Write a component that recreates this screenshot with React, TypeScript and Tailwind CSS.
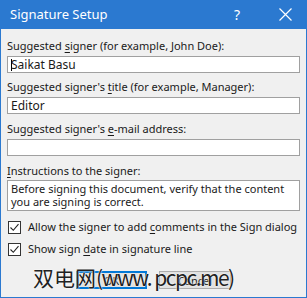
import React from 'react';

const Label = ({ pre, u, post }: { pre: string; u: string; post: string }) => (
  <div className="h-[16px] leading-[16px] whitespace-nowrap">
    {pre}
    <span className="underline underline-offset-2">{u}</span>
    {post}
  </div>
);

const Check = () => (
  <span className="w-[13px] h-[13px] border border-[#333333] bg-white flex items-center justify-center shrink-0">
    <svg width="11" height="11" viewBox="0 0 11 11">
      <path d="M1.5 5.5 L4.3 8.3 L9.5 2.2" fill="none" stroke="#222" strokeWidth="1.1" />
    </svg>
  </span>
);

export default function App() {
  return (
    <div className="relative w-[307px] h-[298px] bg-[#f0f0f0] border-x border-b border-[#2b79d0] font-['Noto_Sans',sans-serif] text-[11px] text-[#1a1a1a] overflow-hidden">
      <div className="h-[29px] -mx-px bg-[#2b79d0] flex items-center pl-[10px] pr-[15px] text-white text-[13px]">
        <span className="flex-1">Signature Setup</span>
        <span className="w-[10px] text-[14px] mr-[35px]">?</span>
        <svg width="13" height="13" viewBox="0 0 13 13">
          <path d="M0.5 0.5 L12.5 12.5 M12.5 0.5 L0.5 12.5" stroke="white" strokeWidth="1.2" />
        </svg>
      </div>

      <div className="px-[6px] pt-[9px]">
        <Label pre="Suggested " u="s" post="igner (for example, John Doe):" />
        <div className="mt-[2px] h-[17px] bg-white border border-[#a0a0a0] flex items-center pl-[3px] leading-none text-[12px]">
          <span className="w-px h-[12px] bg-black mr-[-1px]" />
          Saikat Basu
        </div>

        <div className="mt-[6px]">
          <Label pre="Suggested signer's " u="t" post="itle (for example, Manager):" />
        </div>
        <div className="mt-[2px] h-[17px] bg-white border border-[#a0a0a0] flex items-center pl-[3px] leading-none text-[12px]">
          Editor
        </div>

        <div className="mt-[7px]">
          <Label pre="Suggested signer's " u="e" post="-mail address:" />
        </div>
        <div className="mt-[2px] h-[17px] bg-white border border-[#a0a0a0]" />

        <div className="mt-[7px]">
          <Label pre="" u="I" post="nstructions to the signer:" />
        </div>
        <div className="mt-[1px] h-[31px] bg-white border border-[#a0a0a0] px-[3px] pt-[1px] leading-[13px] whitespace-nowrap">
          Before signing this document, verify that the content
          <br />
          you are signing is correct.
        </div>

        <div className="mt-[10px] flex items-center gap-[7px] pl-px h-[12px]">
          <Check />
          <span className="whitespace-nowrap">
            Allow the signer to add <span className="underline underline-offset-2">c</span>omments in the Sign dialog
          </span>
        </div>
        <div className="mt-[10px] flex items-center gap-[7px] pl-px h-[12px]">
          <Check />
          <span className="whitespace-nowrap">
            Show sign <span className="underline underline-offset-2">d</span>ate in signature line
          </span>
        </div>

        <div className="mt-[16px] flex justify-center gap-[12px]">
          <button className="w-[71px] h-[18px] bg-[#e1e1e1] border-2 border-[#0078d7] text-[11px] leading-none">
            OK
          </button>
          <button className="w-[72px] h-[18px] bg-[#e1e1e1] border border-[#adadad] text-[11px] leading-none">
            Cancel
          </button>
        </div>
      </div>

      <div className="absolute left-[32px] top-[264px] text-[21px] leading-[26px] text-[#222] whitespace-nowrap font-['Noto_Sans_CJK_SC',sans-serif] [text-shadow:0_0_2px_#fff,0_0_1px_#fff]">
        双电网<span className="tracking-[-1.5px]">(www. pcpc.me)</span>
      </div>
    </div>
  );
}
